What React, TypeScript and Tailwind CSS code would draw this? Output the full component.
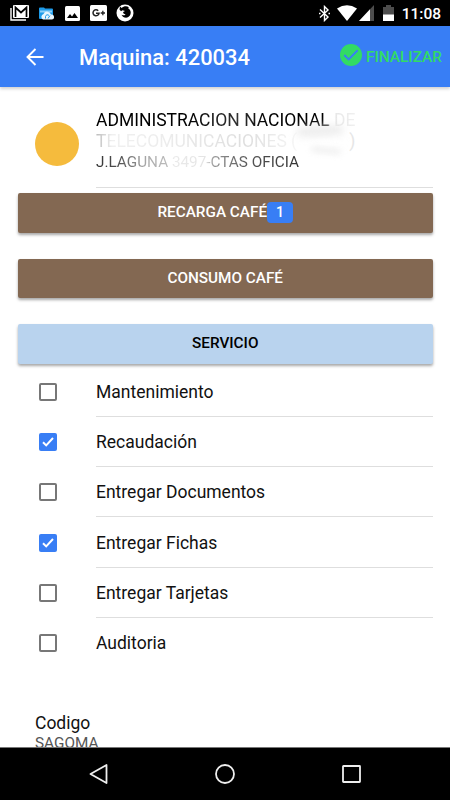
import React, { useState } from "react";

interface Service {
  id: string;
  label: string;
  checked: boolean;
}

const initialServices: Service[] = [
  { id: "mantenimiento", label: "Mantenimiento", checked: false },
  { id: "recaudacion", label: "Recaudación", checked: true },
  { id: "documentos", label: "Entregar Documentos", checked: false },
  { id: "fichas", label: "Entregar Fichas", checked: true },
  { id: "tarjetas", label: "Entregar Tarjetas", checked: false },
  { id: "auditoria", label: "Auditoria", checked: false },
];

const StatusBar: React.FC = () => (
  <div className="flex h-[26px] shrink-0 items-center justify-between bg-black pl-[10px] pr-[9px] text-white">
    <div className="flex items-center">
      <svg width="19" height="16" viewBox="0 0 19 16" fill="none">
        <path d="M1 3v12h15" stroke="#fff" strokeWidth="1.4" />
        <rect x="3" y="0" width="16" height="13" rx="1" fill="#fff" />
        <path d="M5.5 12V2.5L11 7.5l5.500-5V12" stroke="#000" strokeWidth="1.700" />
      </svg>
      <svg className="ml-[10px]" width="15" height="13" viewBox="0 0 15 13">
        <path d="M0 1.500Q0 .5 1 .5h4l1 1h7q1 0 1 1V12H1q-1 0-1-1z" fill="#1e9be9" />
        <path d="M1 3.500h12v2H1z" fill="#8fd0f8" />
        <path d="M4 12.500a3 3 0 0 1 .5-5.500 4 4 0 0 1 7.500.5 2.500 2.500 0 0 1 1 5z" fill="#e8f6ff" />
        <path d="M6.500 11.500V9.500a2 2 0 0 1 3.500-1M9 11.500l2-3" stroke="#1e9be9" fill="none" />
      </svg>
      <svg className="ml-[11px]" width="15" height="15" viewBox="0 0 15 15">
        <rect width="15" height="15" rx="1.500" fill="#fff" />
        <path d="M2 12l3-4 2 2.500L9.500 7 13 12z" fill="#000" />
      </svg>
      <svg className="ml-[10px]" width="17" height="16" viewBox="0 0 17 16" fill="none">
        <rect width="17" height="16" rx="1.500" fill="#fff" />
        <path d="M8.200 5.700a3 3 0 1 0 .8 2.600H6" stroke="#222" strokeWidth="1.500" />
        <path d="M10.700 8h4.300M12.850 5.850v4.300" stroke="#222" strokeWidth="1.300" />
      </svg>
      <svg className="ml-[9px]" width="18" height="18" viewBox="0 0 18 18">
        <circle cx="9" cy="9" r="8.500" fill="#fff" />
        <path
          d="M3.500 5.500L4 2.500l1.700 1.600C7.500 2 11 1.800 12.800 3.300l-.6.9c2.300 1.300 3 3.800 2.300 6-.9 2.700-3.500 3.900-6 3.300-1.600-.4-2.700-1.600-2.900-2.700 1.600.9 3 .6 4-.4-1.700-.2-2.700-1-2.400-2.300l1.800-1-2.500-.8-1.500 1z"
          fill="#000"
        />
      </svg>
    </div>
    <div className="flex items-center">
      <svg width="11" height="17" viewBox="0 0 11 17" fill="none">
        <path d="M1 4.500l8 7.500-3.500 3.500V1.500L9 5l-8 7.500" stroke="#fff" strokeWidth="1.400" />
        <path d="M0 8.500h1.500M9.500 8.500H11" stroke="#fff" strokeWidth="1.500" />
      </svg>
      <svg className="ml-[7px]" width="20" height="16" viewBox="0 0 20 16">
        <path d="M0 3.500Q10-3 20 3.500L10 16z" fill="#fff" />
      </svg>
      <svg className="ml-[2px]" width="15" height="16" viewBox="0 0 15 16">
        <path d="M0 16L15 0v16z" fill="#4d4d4d" />
        <path d="M0 16L11 4.200V16z" fill="#fff" />
      </svg>
      <svg className="ml-[9px]" width="11" height="16" viewBox="0 0 11 16">
        <path d="M3 0h5v2h3v8H0V2h3z" fill="#4d4d4d" />
        <path d="M0 9.500h11V16H0z" fill="#fff" />
      </svg>
      <span className="ml-[8px] pt-[3px] text-[15.500px] leading-none font-medium">11:08</span>
    </div>
  </div>
);

const Header: React.FC = () => (
  <header className="relative z-10 flex h-[61px] shrink-0 items-center bg-[#387ef5] pl-[26px] pr-[8px] shadow-[0_2px_3px_rgba(0,0,0,0.18)]">
    <button type="button" aria-label="Volver">
      <svg width="18" height="18" viewBox="0 0 18 18" fill="none" stroke="#fff" strokeWidth="1.900">
        <path d="M17.500 9H1.500M9.500 1L1.500 9l8 8" />
      </svg>
    </button>
    <h1 className="ml-[35px] pt-[2px] text-[21.900px] leading-none font-medium text-white">
      Maquina: 420034
    </h1>
    <button
      type="button"
      className="ml-auto flex items-center gap-[4px] text-[15.400px] font-medium text-[#32db64]"
    >
      <svg className="-mt-[2px]" width="22" height="22" viewBox="0 0 23 23" fill="none">
        <circle cx="11.500" cy="11.500" r="11.500" fill="#32db64" />
        <path d="M4.500 11.500l4.500 4.500 9.500-9.500" stroke="#387ef5" strokeWidth="2" />
      </svg>
      <span className="pt-[2px]">FINALIZAR</span>
    </button>
  </header>
);

interface ActionButtonProps {
  className: string;
  children: React.ReactNode;
}

const ActionButton: React.FC<ActionButtonProps> = ({ className, children }) => (
  <button
    type="button"
    className={`flex h-[39.500px] w-full items-center justify-center rounded-[2px] text-[15.300px] font-medium shadow-[0_2px_3px_rgba(0,0,0,0.35)] ${className}`}
  >
    {children}
  </button>
);

const ClientItem: React.FC = () => (
  <div className="flex h-[101px] items-center">
    <div className="ml-[35px] mt-[12px] size-[44px] shrink-0 rounded-full bg-[#f5bb3d]" />
    <div className="ml-[17px] mr-[17px] h-full flex-1 border-b border-[#dedede] pt-[22px]">
      <p className="w-fit bg-[linear-gradient(90deg,#000_35%,#333_55%,#000_66%,#000_89%,#e6e6e6_91%,#f0f0f0_100%)] bg-clip-text text-[17.500px] leading-[22px] whitespace-nowrap text-transparent">
        ADMINISTRACION NACIONAL DE
      </p>
      <p className="relative w-fit text-[17.500px] leading-[21px] whitespace-nowrap">
        <span className="bg-[linear-gradient(90deg,#bbb_0%,#f0f0f0_8%,#ececec_35%,#dedede_75%,#f6f6f6_100%)] bg-clip-text text-transparent">
          TELECOMUNICACIONES (
        </span>
        <span className="ml-[52px] text-[#e6e6e6]">)</span>
        <span className="absolute top-[-4px] right-[12px] h-[8px] w-[46px] -rotate-3 rounded-full bg-[#e8e8e8] blur-[4px]" />
        <span className="absolute right-[14px] bottom-[-1px] h-[5px] w-[30px] rotate-6 rounded-full bg-[#ededed] blur-[3px]" />
      </p>
      <p className="w-fit bg-[linear-gradient(90deg,#333_0%,#555_12%,#aaa_25%,#bbb_35%,#eaeaea_38%,#e4e4e4_54%,#999_58%,#555_75%,#333_100%)] bg-clip-text text-[15.300px] leading-[21px] whitespace-nowrap text-transparent">
        J.LAGUNA 3497-CTAS OFICIA
      </p>
    </div>
  </div>
);

interface ServiceItemProps {
  service: Service;
  onToggle: (id: string) => void;
}

const ServiceItem: React.FC<ServiceItemProps> = ({ service, onToggle }) => (
  <label className="group flex h-[50.300px] items-center">
    <input
      type="checkbox"
      className="sr-only"
      checked={service.checked}
      onChange={() => onToggle(service.id)}
    />
    <span
      className={`ml-[39px] flex size-[18px] shrink-0 items-center justify-center rounded-[2px] ${
        service.checked ? "bg-[#387ef5]" : "border-2 border-[#777]"
      }`}
    >
      {service.checked && (
        <svg width="12" height="10" viewBox="0 0 12 10" fill="none">
          <path d="M1 5.200l3.200 3.200L11 1" stroke="#fff" strokeWidth="2" />
        </svg>
      )}
    </span>
    <span className="ml-[39px] mr-[17px] flex h-full flex-1 items-center border-b border-[#dedede] pt-[1.500px] text-[17.500px] text-[#111] group-last:border-transparent">
      {service.label}
    </span>
  </label>
);

const App: React.FC = () => {
  const [services, setServices] = useState<Service[]>(initialServices);

  const handleToggle = (id: string) => {
    setServices((prev) =>
      prev.map((s) => (s.id === id ? { ...s, checked: !s.checked } : s))
    );
  };

  return (
    <div className="flex h-[800px] w-[450px] flex-col overflow-hidden bg-white font-[Roboto,sans-serif]">
      <StatusBar />
      <Header />

      <main className="min-h-0 flex-1 overflow-hidden">
        <ClientItem />

        <div className="flex flex-col gap-[26px] pr-[17px] pl-[17.500px] pt-[5px]">
          <ActionButton className="bg-[#836852] text-white">
            RECARGA CAFÉ
            <span className="flex h-[21px] w-[26px] items-center justify-center rounded-[4px] bg-[#387ef5] text-[14px]">
              1
            </span>
          </ActionButton>
          <ActionButton className="bg-[#836852] text-white">CONSUMO CAFÉ</ActionButton>
          <ActionButton className="bg-[#b9d3ee] text-black">SERVICIO</ActionButton>
        </div>

        <div className="pt-[3px]">
          {services.map((service) => (
            <ServiceItem key={service.id} service={service} onToggle={handleToggle} />
          ))}
        </div>

        <div className="ml-[35px] pt-[44px]">
          <h2 className="text-[17.500px] leading-[22px] text-[#111]">Codigo</h2>
          <p className="text-[15.300px] leading-[19px] text-[#555]">SAGOMA</p>
        </div>
      </main>

      <nav className="flex h-[53px] shrink-0 items-center border-t border-[#777] bg-black pl-[89px]">
        <svg width="20" height="20" viewBox="0 0 20 20" fill="none" stroke="#eee" strokeWidth="1.800">
          <path d="M17.500 1v18L1.500 10z" strokeLinejoin="round" />
        </svg>
        <svg className="ml-[106px]" width="20" height="20" viewBox="0 0 20 20" fill="none" stroke="#eee" strokeWidth="1.800">
          <circle cx="10" cy="10" r="9" />
        </svg>
        <svg className="ml-[107px]" width="19" height="18" viewBox="0 0 19 18" fill="none" stroke="#eee" strokeWidth="1.800">
          <rect x="1" y="1" width="17" height="16" rx=".5" />
        </svg>
      </nav>
    </div>
  );
};

export default App;
